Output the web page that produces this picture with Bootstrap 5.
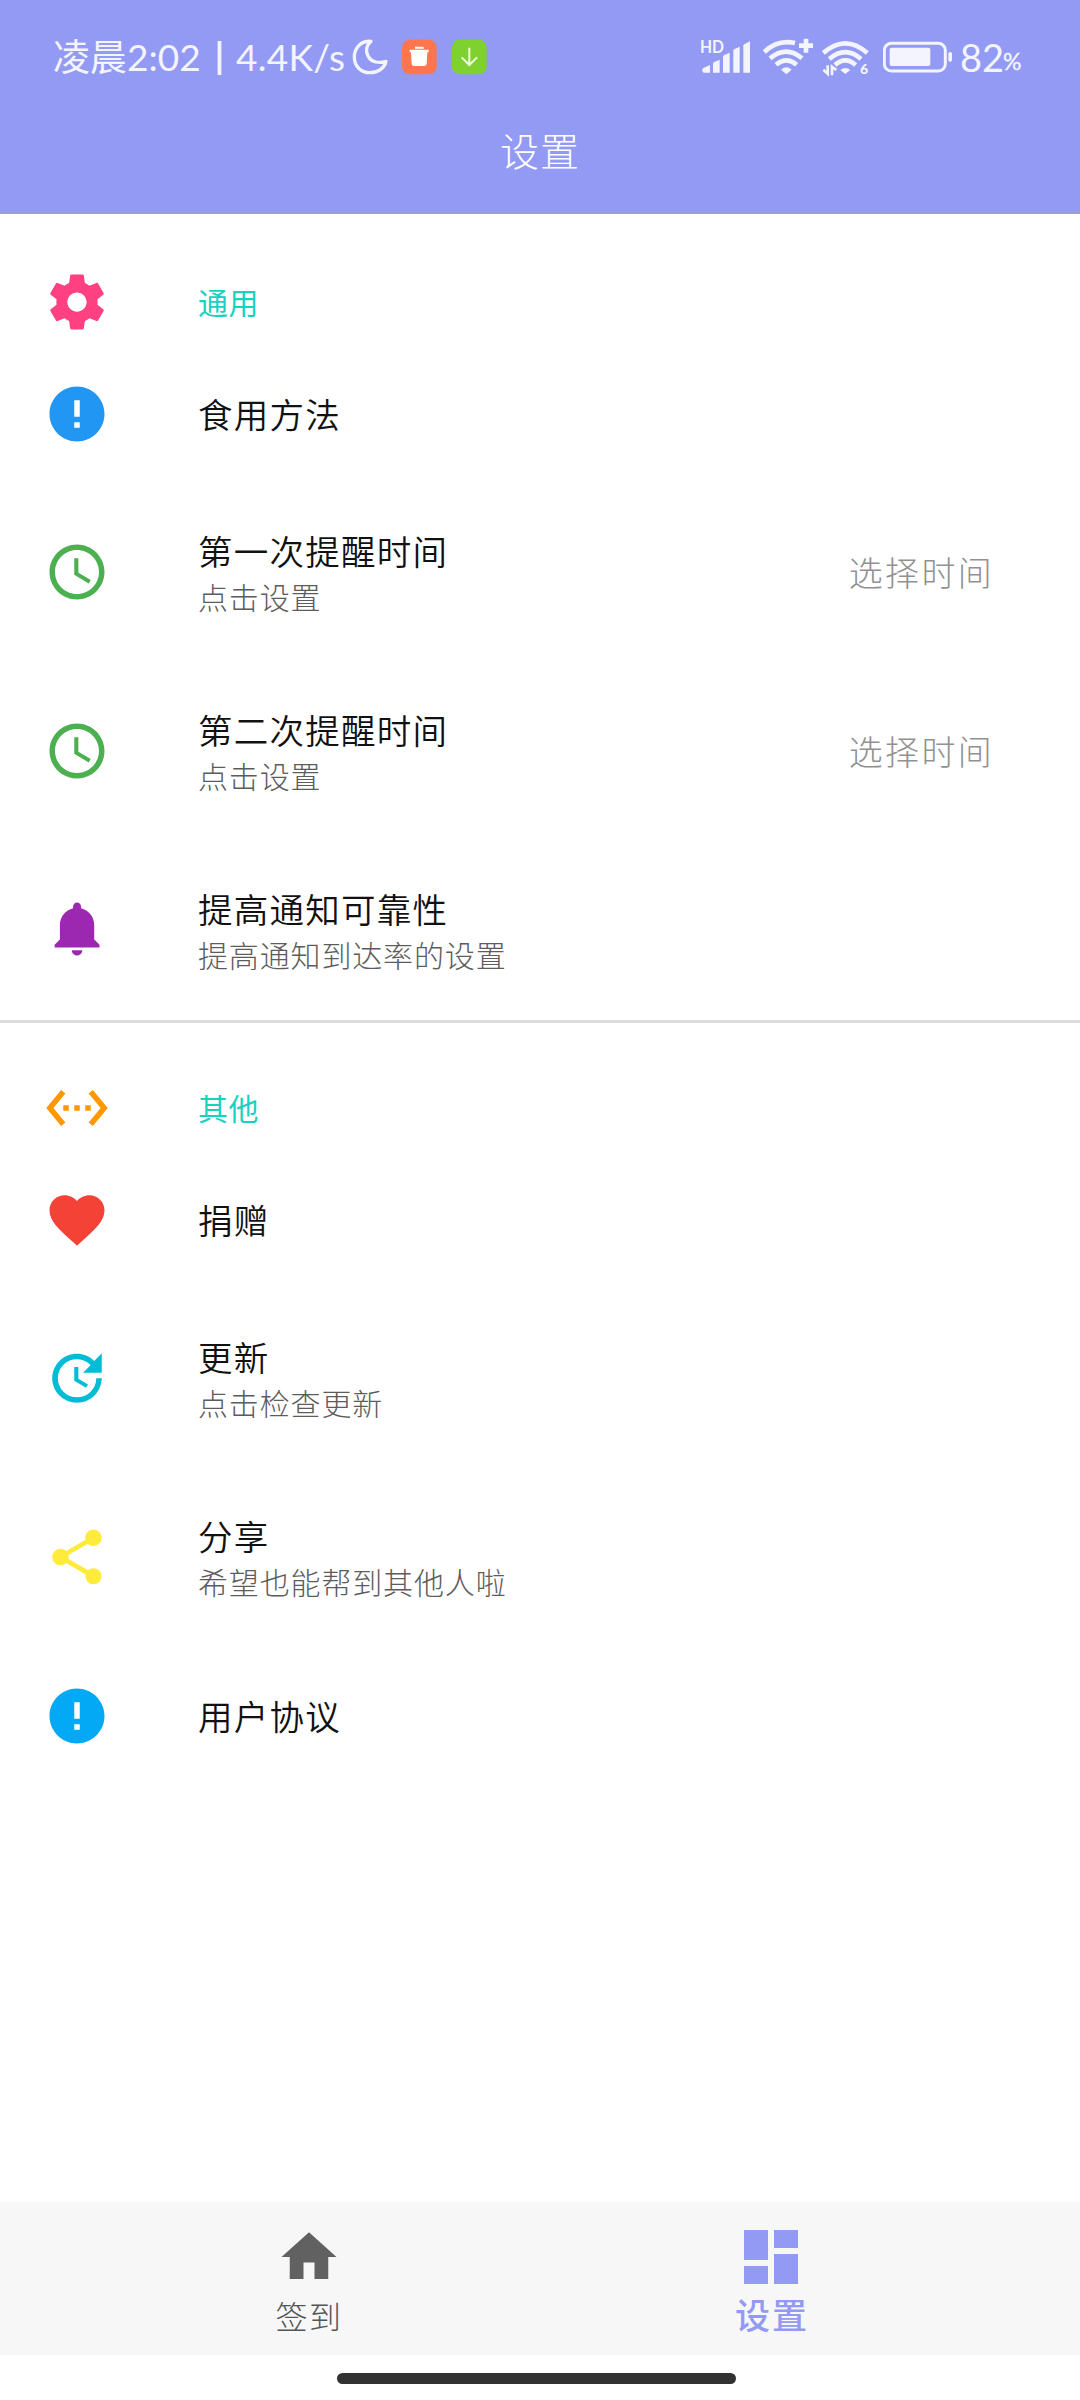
<!DOCTYPE html>
<html lang="zh-CN">
<head>
<meta charset="utf-8">
<meta name="viewport" content="width=device-width, initial-scale=1">
<title>设置</title>
<link href="https://cdn.jsdelivr.net/npm/bootstrap@5.3.0/dist/css/bootstrap.min.css" rel="stylesheet">
<style>
  body { font-family: "Noto Sans CJK SC", sans-serif; background: #fff; color: #111; }
  .screen { width: 1080px; height: 2400px; overflow: hidden; }
  .top-area { height: 214px; background: #939af3; border-bottom: 2px solid #9a9be0; color: #fff; }
  .status-bar { height: 114px; padding-left: 53px; font-family: Lato, "Noto Sans CJK SC", sans-serif; color: #f3f4ff; line-height: 40px; }
  .status-bar svg { height: 40px; flex: none; display: block; }
  .clock-cn { font-size: 37px; width: 74px; letter-spacing: -.3px; }
  .clock-num { font-size: 37px; width: 90px; }
  .net-speed { font-size: 37px; width: 116px; margin-left: 14px; letter-spacing: .3px; }
  .ico-moon { margin-left: 0; }
  .ico-trash { margin-left: 13px; }
  .ico-down { margin-left: 15px; }
  .ico-wifi { margin-left: 12px; }
  .ico-wifi6 { margin-left: 9px; }
  .ico-battery { margin-left: 13px; }
  .bat-num { font-size: 38px; width: 43px; margin-left: 7px; }
  .bat-pct { font-size: 23px; width: 20px; padding-top: 8px; margin-right: 57px; -webkit-text-stroke: .4px #f3f4ff; }
  .page-title { height: 74px; font-size: 39px; font-weight: 300; letter-spacing: 1px; line-height: 71px; }
  .set-icon { width: 66px; height: 66px; flex: none; margin-left: 44px; margin-right: 88px; display: block; }
  .group-head { height: 131px; padding-top: 45px; color: #17d2bf; font-size: 30px; letter-spacing: .6px; line-height: 40px; padding-bottom: 0; }
  .group-head span { padding-bottom: 2px; }
  .group-two { height: 128px; padding-top: 42px; }
  .row-one { height: 138px; }
  .row-one .item-title { padding-bottom: 2px; }
  .row-two { height: 178.8px; }
  .item-title { font-size: 34.5px; font-weight: 350; letter-spacing: 1.25px; line-height: 46px; }
  .item-sub { font-size: 30px; font-weight: 300; letter-spacing: .85px; line-height: 46px; color: #5c5c5c; }
  .two-lines { padding-top: 2px; }
  .pick-time { font-size: 34px; font-weight: 300; letter-spacing: 2.3px; color: #919191; margin-right: 86px; padding-bottom: 1px; }
  .split-line { height: 3px; margin-top: .6px; background: #dcdcdc; }
  .tab-strip { height: 153px; background: #f7f7f7; padding: 0 77px; }
  .tab-strip svg { display: block; }
  .tab-item { width: 463px; }
  .ico-home { margin-top: 22px; margin-bottom: 5px; }
  .ico-board { margin-top: 19px; margin-bottom: 1px; margin-right: 1px; }
  .tab-label { font-size: 32px; font-weight: 300; letter-spacing: 1.5px; line-height: 40px; color: #555; padding-left: 1px; }
  .tab-active { font-size: 35px; font-weight: 500; letter-spacing: 2px; color: #939af3; }
  .gesture-area { height: 45px; padding-top: 18px; padding-right: 7px; }
  .gesture-pill { width: 399px; height: 11px; border-radius: 6px; background: #323232; }
</style>
</head>
<body>
<div class="screen d-flex flex-column">
  <header class="top-area flex-shrink-0">
    <div class="status-bar d-flex align-items-center">
      <span class="clock-cn text-nowrap">凌晨</span>
      <span class="clock-num">2:02</span>
      <svg width="5" viewBox="0 0 5 40"><path d="M2.5 4v34" stroke="#f3f4ff" stroke-width="3.8"/></svg>
      <span class="net-speed text-nowrap">4.4K/s</span>
      <svg class="ico-moon" width="37" viewBox="933 51 111 120"><path d="M990 64C957 62 940 86 940 111c0 29 21 47 47 47 24 0 43-13 48-34-21 7-43 3-53-14-9-16-6-33 8-46z" fill="none" stroke="#f3f4ff" stroke-width="10" stroke-linejoin="round"/></svg>
      <svg class="ico-trash" width="35" viewBox="1086 51 105 120"><rect x="1086" y="59" width="104" height="104" rx="23" fill="#ff754d"/><path d="M1125 80h26v6h-26zM1109 89h57v8h-4l-2 35q-1 6-7 6h-31q-6 0-7-6l-2-35h-4z" fill="#fff"/></svg>
      <svg class="ico-down" width="35" viewBox="1235 51 105 120"><rect x="1235" y="59" width="104" height="104" rx="23" fill="#7fd12f"/><path d="M1287 83v52m-23-23 23 23 23-23" fill="none" stroke="#efffe0" stroke-width="6"/></svg>

      <svg width="51" viewBox="60 51 153 120" class="ms-auto" fill="#f3f4ff"><text x="60" y="99" font-family="Lato" font-weight="700" font-size="50" textLength="72" lengthAdjust="spacingAndGlyphs">HD</text><path d="M67 149q0-4 5-6l18-8v23H72q-5 0-5-5zM99 131q0-3 4-5l16-7v39H99zM129 110q0-3 4-5l16-7v60h-20zM160 92q0-3 4-5l15-7v78h-19zM190 77q0-3 4-5l16-8v94h-20z"/></svg>
      <svg class="ico-wifi" width="50" viewBox="248 51 150 120" fill="none" stroke="#f3f4ff" stroke-width="14"><path d="M252 96Q292 57 344 69M269 115Q318 75 365 115M287 134Q318 108 349 134M377 56v42m-21-21h42"/><path d="M302 149q16-14 32 0l-16 14z" fill="#f3f4ff" stroke="none"/></svg>
      <svg class="ico-wifi6" width="48" viewBox="427 51 144 120" fill="none" stroke="#f3f4ff" stroke-width="14"><path d="M431 99Q497 41 563 99M449 117Q497 76 544 117M466 135Q497 107 528 135"/><path d="M482 150q15-12 30 0l-15 12z" fill="#f3f4ff" stroke="none"/><path d="M431 149l13 12v-25M457 166v-26l13 10" stroke-width="8"/><text x="541" y="163" fill="#f3f4ff" stroke="none" font-family="Lato" font-weight="900" font-size="42">6</text></svg>
      <svg class="ico-battery" width="70" viewBox="611 51 210 120" fill="#f3f4ff"><rect x="615" y="70" width="183" height="83" rx="21" fill="none" stroke="#f3f4ff" stroke-width="9"/><rect x="631" y="83" width="122" height="55" rx="6"/><rect x="807" y="96" width="11" height="29" rx="5"/></svg>
      <span class="bat-num">82</span><span class="bat-pct">%</span>
    </div>
    <div class="page-title text-center">设置</div>
  </header>

  <main class="flex-grow-1">
    <div class="group-head d-flex align-items-center">
      <svg class="set-icon" viewBox="0 0 24 24" fill="#ff4081"><path d="M19.43 12.98c.04-.32.07-.64.07-.98s-.03-.66-.07-.98l2.11-1.65c.19-.15.24-.42.12-.64l-2-3.46c-.12-.22-.39-.3-.61-.22l-2.49 1c-.52-.4-1.08-.73-1.69-.98l-.38-2.65C14.46 2.18 14.25 2 14 2h-4c-.25 0-.46.18-.49.42l-.38 2.65c-.61.25-1.17.59-1.69.98l-2.49-1c-.23-.09-.49 0-.61.22l-2 3.46c-.13.22-.07.49.12.64l2.11 1.65c-.04.32-.07.65-.07.98s.03.66.07.98l-2.11 1.65c-.19.15-.24.42-.12.64l2 3.46c.12.22.39.3.61.22l2.49-1c.52.4 1.08.73 1.69.98l.38 2.65c.03.24.24.42.49.42h4c.25 0 .46-.18.49-.42l.38-2.65c.61-.25 1.17-.59 1.69-.98l2.49 1c.23.09.49 0 .61-.22l2-3.46c.12-.22.07-.49-.12-.64l-2.11-1.65zM12 15.5c-1.93 0-3.5-1.57-3.5-3.5s1.57-3.5 3.5-3.5 3.5 1.57 3.5 3.5-1.57 3.5-3.5 3.5z"/></svg>
      <span>通用</span>
    </div>
    <div class="row-one d-flex align-items-center">
      <svg class="set-icon" viewBox="0 0 24 24" fill="#2196f3"><path d="M12 2C6.48 2 2 6.48 2 12s4.48 10 10 10 10-4.48 10-10S17.52 2 12 2zm1 15h-2v-2h2v2zm0-4h-2V7h2v6z"/></svg>
      <div class="item-title">食用方法</div>
    </div>
    <div class="row-two d-flex align-items-center">
      <svg class="set-icon" viewBox="0 0 24 24" fill="#4caf50"><path d="M11.99 2C6.47 2 2 6.48 2 12s4.47 10 9.99 10C17.52 22 22 17.52 22 12S17.52 2 11.99 2zM12 20c-4.42 0-8-3.58-8-8s3.58-8 8-8 8 3.58 8 8-3.58 8-8 8zm.5-13H11v6l5.25 3.15.75-1.23-4.5-2.67z"/></svg>
      <div class="two-lines flex-grow-1"><div class="item-title">第一次提醒时间</div><div class="item-sub">点击设置</div></div>
      <div class="pick-time">选择时间</div>
    </div>
    <div class="row-two d-flex align-items-center">
      <svg class="set-icon" viewBox="0 0 24 24" fill="#4caf50"><path d="M11.99 2C6.47 2 2 6.48 2 12s4.47 10 9.99 10C17.52 22 22 17.52 22 12S17.52 2 11.99 2zM12 20c-4.42 0-8-3.58-8-8s3.58-8 8-8 8 3.58 8 8-3.58 8-8 8zm.5-13H11v6l5.25 3.15.75-1.23-4.5-2.67z"/></svg>
      <div class="two-lines flex-grow-1"><div class="item-title">第二次提醒时间</div><div class="item-sub">点击设置</div></div>
      <div class="pick-time">选择时间</div>
    </div>
    <div class="row-two d-flex align-items-center">
      <svg class="set-icon" viewBox="0 0 24 24" fill="#9c27b0"><path d="M11.5 22c1.1 0 2-.9 2-2h-4c0 1.1.9 2 2 2zm6.5-6v-5.5c0-3.07-2.13-5.64-5-6.32V3.5c0-.83-.67-1.5-1.5-1.5S10 2.67 10 3.5v.68c-2.87.68-5 3.25-5 6.32V16l-2 2v1h17v-1l-2-2z" transform="translate(.98 .12) scale(.96)"/></svg>
      <div class="two-lines"><div class="item-title">提高通知可靠性</div><div class="item-sub">提高通知到达率的设置</div></div>
    </div>
    <div class="split-line"></div>

    <div class="group-head group-two d-flex align-items-center">
      <svg class="set-icon" viewBox="0 0 24 24" fill="#ff9800"><path d="M7.77 6.76L6.23 5.48.82 12l5.41 6.52 1.54-1.28L3.42 12l4.35-5.24zM7 13h2v-2H7v2zm10-2h-2v2h2v-2zm-6 2h2v-2h-2v2zm6.77-7.52l-1.54 1.28L20.58 12l-4.35 5.24 1.54 1.28L23.18 12l-5.41-6.52z"/></svg>
      <span>其他</span>
    </div>
    <div class="row-one d-flex align-items-center">
      <svg class="set-icon" viewBox="0 0 24 24" fill="#f44336"><path d="M12 21.35l-1.45-1.32C5.4 15.36 2 12.28 2 8.5 2 5.42 4.42 3 7.5 3c1.74 0 3.41.81 4.5 2.09C13.09 3.81 14.76 3 16.5 3 19.58 3 22 5.42 22 8.5c0 3.78-3.4 6.86-8.55 11.54L12 21.35z"/></svg>
      <div class="item-title">捐赠</div>
    </div>
    <div class="row-two d-flex align-items-center">
      <svg class="set-icon" viewBox="0 0 24 24" fill="#00bcd4"><path d="M21 10.12h-6.78l2.74-2.82c-2.73-2.7-7.15-2.8-9.88-.1-2.73 2.71-2.73 7.08 0 9.79s7.15 2.71 9.88 0C18.32 15.65 19 14.08 19 12.1h2c0 1.98-.88 4.55-2.64 6.29-3.51 3.48-9.21 3.48-12.72 0-3.5-3.47-3.53-9.11-.02-12.58s9.14-3.47 12.65 0L21 3v7.12zM12.5 8v4.25l3.5 2.08-.72 1.21L11 13V8h1.5z"/></svg>
      <div class="two-lines"><div class="item-title">更新</div><div class="item-sub">点击检查更新</div></div>
    </div>
    <div class="row-two d-flex align-items-center">
      <svg class="set-icon" viewBox="0 0 24 24" fill="#ffeb3b"><path d="M18 16.08c-.76 0-1.44.3-1.96.77L8.91 12.7c.05-.23.09-.46.09-.7s-.04-.47-.09-.7l7.05-4.11c.54.5 1.25.81 2.04.81 1.66 0 3-1.34 3-3s-1.34-3-3-3-3 1.34-3 3c0 .24.04.47.09.7L8.04 9.81C7.5 9.31 6.79 9 6 9c-1.66 0-3 1.34-3 3s1.34 3 3 3c.79 0 1.5-.31 2.04-.81l7.12 4.16c-.05.21-.08.43-.08.65 0 1.61 1.31 2.92 2.92 2.92s2.92-1.31 2.92-2.92-1.31-2.92-2.92-2.92z"/></svg>
      <div class="two-lines"><div class="item-title">分享</div><div class="item-sub">希望也能帮到其他人啦</div></div>
    </div>
    <div class="row-one d-flex align-items-center">
      <svg class="set-icon" viewBox="0 0 24 24" fill="#03a9f4"><path d="M12 2C6.48 2 2 6.48 2 12s4.48 10 10 10 10-4.48 10-10S17.52 2 12 2zm1 15h-2v-2h2v2zm0-4h-2V7h2v6z"/></svg>
      <div class="item-title">用户协议</div>
    </div>
  </main>

  <nav class="tab-strip d-flex flex-shrink-0">
    <div class="tab-item d-flex flex-column align-items-center">
      <svg class="ico-home" width="66" height="66" viewBox="0 0 24 24" fill="#616161"><path d="M10 20v-6h4v6h5v-8h3L12 3 2 12h3v8z"/></svg>
      <div class="tab-label">签到</div>
    </div>
    <div class="tab-item d-flex flex-column align-items-center">
      <svg class="ico-board" width="72" height="72" viewBox="0 0 24 24" fill="#939af3"><path d="M3 13h8V3H3v10zm0 8h8v-6H3v6zm10 0h8V11h-8v10zm0-18v6h8V3h-8z"/></svg>
      <div class="tab-label tab-active">设置</div>
    </div>
  </nav>
  <div class="gesture-area d-flex justify-content-center flex-shrink-0"><div class="gesture-pill"></div></div>
</div>
<script src="https://cdn.jsdelivr.net/npm/bootstrap@5.3.0/dist/js/bootstrap.bundle.min.js"></script>
</body>
</html>
